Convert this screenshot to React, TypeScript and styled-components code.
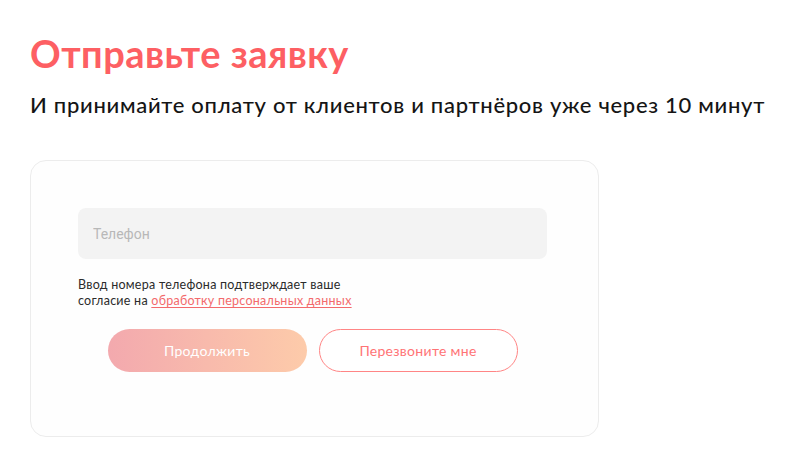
import React from "react";
import styled, { createGlobalStyle } from "styled-components";

const GlobalStyle = createGlobalStyle`
  * { box-sizing: border-box; }
  body {
    margin: 0;
    background: #ffffff;
    font-family: "Lato", "Noto Sans", sans-serif;
    color: #1a1a1a;
  }
`;

const Page = styled.div`
  padding: 30px 30px 0;
  width: 800px;
`;

const Title = styled.h1`
  margin: 0;
  font-size: 38px;
  line-height: 46px;
  font-weight: 700;
  letter-spacing: 0.45px;
  color: #fd5f63;
`;

const Subtitle = styled.p`
  margin: 16px 0 0;
  font-size: 22px;
  line-height: 26px;
  font-weight: 500;
  letter-spacing: 0.7px;
  color: #151515;
`;

const Card = styled.div`
  margin-top: 42px;
  width: 569px;
  height: 277px;
  padding: 47px 47px 0;
  border: 1px solid #ececec;
  border-radius: 16px;
  background: #fefefe;
  display: flex;
  flex-direction: column;
`;

const PhoneInput = styled.input`
  width: 469px;
  height: 51px;
  border: none;
  border-radius: 8px;
  background: #f3f3f3;
  padding: 0 15px;
  font-family: "Roboto", "Liberation Sans", sans-serif;
  font-size: 14px;
  color: #333;
  outline: none;

  &::placeholder {
    color: #b8b8b8;
  }
`;

const Consent = styled.p`
  margin: 18px 0 0;
  font-size: 12.5px;
  line-height: 16px;
  letter-spacing: 0.25px;
  color: #2b2b2b;
`;

const Link = styled.a`
  color: #f36a6c;
  text-decoration: underline;
  text-underline-offset: 2px;
`;

const Actions = styled.div`
  margin-top: 20px;
  width: 469px;
  display: flex;
  justify-content: center;
  gap: 12px;
`;

const Button = styled.button<{ $variant: "primary" | "outline" }>`
  width: 199px;
  height: 43px;
  border-radius: 22px;
  font-family: "Lato", "Noto Sans", sans-serif;
  font-size: 14px;
  letter-spacing: 0.3px;
  cursor: pointer;
  border: ${(p) => (p.$variant === "outline" ? "1px solid #ff8585" : "none")};
  background: ${(p) =>
    p.$variant === "outline"
      ? "#ffffff"
      : "linear-gradient(90deg, #f3a9ae 0%, #fdcbaa 100%)"};
  color: ${(p) => (p.$variant === "outline" ? "#ff7476" : "#ffffff")};
`;

export default function App() {
  return (
    <>
      <GlobalStyle />
      <Page>
        <Title>Отправьте заявку</Title>
        <Subtitle>И принимайте оплату от клиентов и партнёров уже через 10 минут</Subtitle>
        <Card>
          <PhoneInput type="tel" placeholder="Телефон" />
          <Consent>
            Ввод номера телефона подтверждает ваше
            <br />
            согласие на <Link href="#">обработку персональных данных</Link>
          </Consent>
          <Actions>
            <Button $variant="primary">Продолжить</Button>
            <Button $variant="outline">Перезвоните мне</Button>
          </Actions>
        </Card>
      </Page>
    </>
  );
}
